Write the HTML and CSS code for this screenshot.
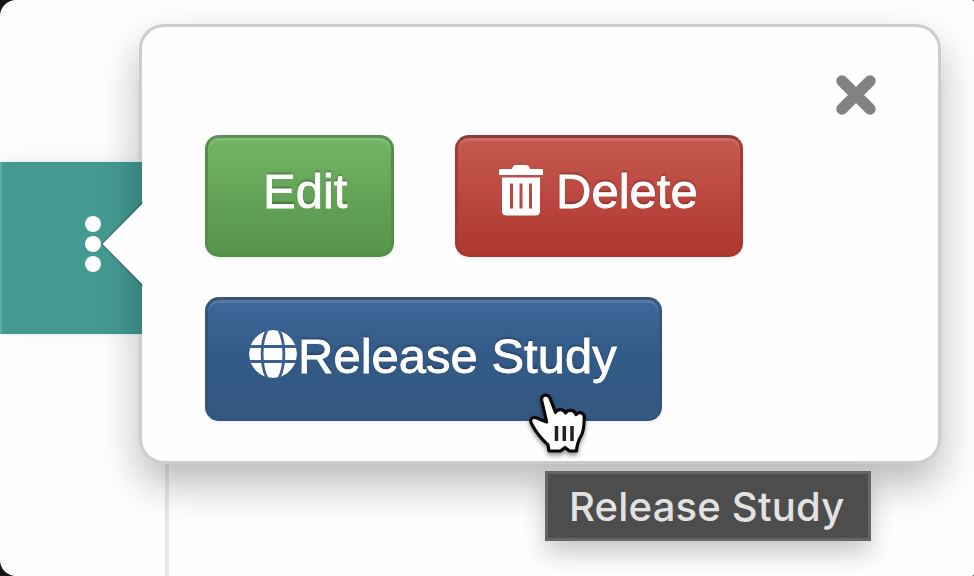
FILE: index.html
```html
<!DOCTYPE html>
<html lang="en">
<head>
<meta charset="utf-8">
<title>Release Study</title>
<link rel="stylesheet" href="styles.css">
</head>
<body>
<main class="window">
  <div class="column">
    <div class="row-cell">
      <div class="dots"><i></i><i></i><i></i></div>
    </div>
    <div class="column-end"></div>
  </div>
  <section class="popover">
    <svg class="arrow" viewBox="0 0 42 86"><path class="arrow-edge" d="M42 0L0 43L42 86Z"/><path class="arrow-fill" d="M42 2L1.500 43L42 84Z"/></svg>
    <header class="popover-head">
      <svg class="close" viewBox="0 0 40 40"><path d="M6 6L34 34M34 6L6 34"/></svg>
    </header>
    <div class="actions">
      <button class="btn edit"><span>Edit</span></button>
      <button class="btn delete">
        <svg class="trash" viewBox="0 0 44 51"><path fill-rule="evenodd" d="M0 5.500Q0 4 1.500 4H13Q14 0 17 0H27Q30 0 31 4H42.500Q44 4 44 5.500V10H0ZM3 12.500H41V46Q41 50.500 36.500 50.500H7.500Q3 50.500 3 46ZM11 18.500V43.500H14V18.500ZM20.500 18.500V43.500H23.500V18.500ZM30 18.500V43.500H33V18.500Z"/></svg>
        <span>Delete</span>
      </button>
      <button class="btn release">
        <svg class="globe" viewBox="0 0 48 48"><circle cx="24" cy="24" r="24"/><path d="M0 16.500H48M0 31.500H48M18 0C11.500 12 11.500 36 18 48M30 0C36.500 12 36.500 36 30 48"/></svg>
        <span>Release Study</span>
      </button>
    </div>
  </section>
  <div class="tooltip">Release Study</div>
  <svg class="cursor" viewBox="0 0 60 62"><path class="hand" d="M19.700 31L14.700 9.500C13.500 3.500 21 2.500 23 7L28.500 21.500C30 17.500 37 17.500 38.500 22C41 18 47.500 18.500 49 23.500C53 20 57.500 22 57.300 27C57 35 57 39.500 54.500 44C51.500 49 50 52 49.500 60H42.500L38 56.500L33.500 60H22L21 54C14 47.500 10 43 5.500 34.500C1 28 6 24.500 11 27.500Z"/><path class="fingers" d="M29.500 35V50M37.300 35V50M45 35V50"/></svg>
</main>
</body>
</html>
```
FILE: styles.css
```css
* { box-sizing: border-box; }

body {
  margin: 0;
  background: #151515;
  font-family: "Liberation Sans", Arial, sans-serif;
}

.window {
  position: relative;
  width: 974px;
  height: 576px;
  overflow: hidden;
  border-radius: 16px 2px 2px 16px;
  background: #fefefe;
}

.column {
  display: flex;
  flex-direction: column;
  justify-content: space-between;
  width: 169px;
  height: 576px;
  padding-top: 162px;
}

.column-end {
  height: 130px;
  border-right: 4px solid #e6e7eb;
}

.row-cell {
  display: flex;
  align-items: center;
  width: 143px;
  height: 172px;
  padding-left: 84px;
  border-left: 2px solid #66aba5;
  background: #449993;
  box-shadow: 0 0 2px #b5e9e6, 0 -4px 20px rgba(0, 0, 0, .06);
}

.row-cell .dots {
  display: flex;
  flex-direction: column;
  gap: 4px;
  margin: -8px 0 0 -1px;
}

.dots i {
  width: 16px;
  height: 16px;
  border-radius: 50%;
  background: #fff;
}

.popover {
  position: absolute;
  left: 139px;
  top: 24px;
  width: 802px;
  height: 440px;
  padding: 48px 62px 0 63px;
  border: 3px solid #ccc;
  border-radius: 25px;
  background: #fefefe;
  box-shadow: 0 20px 40px rgba(0, 0, 0, .27);
}

/* covers the popover border where it crosses the table row */
.popover::before {
  content: "";
  position: absolute;
  left: -3px;
  top: 135px;
  width: 3px;
  height: 172px;
  background: #3a827d;
}

.arrow {
  position: absolute;
  left: -41px;
  top: 174px;
  width: 42px;
  height: 86px;
}

.arrow-edge { fill: rgba(0, 0, 0, .25); }
.arrow-fill { fill: #fefefe; }

.popover-head {
  display: flex;
  justify-content: flex-end;
  height: 60px;
}

.close {
  width: 40px;
  height: 40px;
  fill: none;
  stroke: #838383;
  stroke-width: 11.500;
  stroke-linecap: round;
}

.actions {
  display: flex;
  flex-wrap: wrap;
  gap: 40px 61px;
}

.btn {
  display: flex;
  align-items: center;
  height: 122px;
  padding: 0 0 10px;
  border: 3px solid;
  border-radius: 14px;
  color: #fff;
  font: 49px/56px "Liberation Sans", Arial, sans-serif;
  text-shadow: 0 -2px 2px rgba(0, 0, 0, .3);
  box-shadow: inset 0 3px 1px rgba(255, 255, 255, .12), 0 2px 3px rgba(0, 0, 0, .06);
}

.btn span {
  white-space: nowrap;
  -webkit-text-stroke: .8px #fff;
}

.btn svg { flex: none; }

.edit {
  width: 189px;
  padding-left: 55px;
  border-color: #5f8e59 #529047 #529047;
  background: linear-gradient(#73b566, #569249) border-box;
}

.delete {
  width: 288px;
  padding-left: 41px;
  border-color: #893b35 #a33a33 #a9362f;
  background: linear-gradient(#c65a52, #ae362e) border-box;
}

.release {
  width: 457px;
  height: 124px;
  padding-left: 41px;
  border-color: #3b5272 #34557e #315681;
  background: linear-gradient(#3e6899, #335a86 50%, #335882) border-box;
}

.release span { margin-top: 3px; }

.trash {
  width: 44px;
  height: 51px;
  margin: -2px 13px 0 0;
  fill: #fff;
}

.globe {
  width: 48px;
  height: 48px;
  margin: 0 1px 0 0;
  overflow: hidden;
  border-radius: 50%;
  fill: #fff;
}

.globe path {
  fill: none;
  stroke: #3b608b;
  stroke-width: 2.800;
}

.tooltip {
  position: absolute;
  left: 545px;
  top: 471px;
  width: 326px;
  height: 70px;
  padding-left: 21px;
  border: 3px solid #666;
  background: #4d4d4d;
  color: #e2e2e2;
  font: 500 40px/65px Inter, sans-serif;
  letter-spacing: .2px;
  white-space: nowrap;
  box-shadow: 0 12px 24px rgba(0, 0, 0, .22);
}

.cursor {
  position: absolute;
  left: 527px;
  top: 391px;
  width: 60px;
  height: 62px;
  overflow: visible;
  filter: drop-shadow(0 3px 2px rgba(0, 0, 0, .4));
}

.hand {
  fill: #fff;
  stroke: #080808;
  stroke-width: 3.200;
  stroke-linejoin: round;
}

.fingers {
  fill: none;
  stroke: #222;
  stroke-width: 3.500;
}
```
